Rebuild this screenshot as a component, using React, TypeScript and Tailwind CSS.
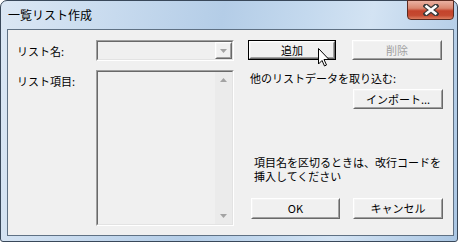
import React from "react";

const FONT = "font-['Noto_Sans_CJK_JP','Noto_Sans',sans-serif]";

function Raised({
  children,
  className = "",
  def = false,
  disabled = false,
}: {
  children?: React.ReactNode;
  className?: string;
  def?: boolean;
  disabled?: boolean;
}) {
  const inner = (
    <div className="h-full w-full border border-t-white border-l-white border-r-[#696969] border-b-[#696969]">
      <div
        className={`h-full w-full border border-t-[#f4f4f4] border-l-[#f4f4f4] border-r-[#a0a0a0] border-b-[#a0a0a0] bg-[#f0f0f0] flex items-center justify-center text-[11px] leading-none ${
          disabled ? "text-[#a0a0a0]" : "text-black"
        }`}
      >
        {children}
      </div>
    </div>
  );
  if (def) {
    return <div className={`border border-black ${className}`}>{inner}</div>;
  }
  return <div className={className}>{inner}</div>;
}

function Sunken({ children, className = "" }: { children?: React.ReactNode; className?: string }) {
  return (
    <div className={`border border-t-[#a0a0a0] border-l-[#a0a0a0] border-r-white border-b-white ${className}`}>
      <div className="h-full w-full border border-t-[#696969] border-l-[#696969] border-r-[#e3e3e3] border-b-[#e3e3e3] bg-[#f0f0f0] flex">
        {children}
      </div>
    </div>
  );
}

function Tri({ up = false }: { up?: boolean }) {
  return (
    <svg width="7" height="4" viewBox="0 0 7 4">
      {up ? <path d="M0 4 L7 4 L3.5 0 Z" fill="#a3a3a3" /> : <path d="M0 0 L7 0 L3.5 4 Z" fill="#a3a3a3" />}
    </svg>
  );
}

export default function App() {
  return (
    <div className={`w-[459px] h-[243px] bg-white overflow-hidden relative ${FONT}`}>
      {/* window */}
      <div className="w-[458px] h-[242px] rounded-t-[7px] rounded-b-[3px] border border-[#39485a] bg-[linear-gradient(100deg,#dbe7f4_0%,#cadcef_20%,#b4cde7_45%,#c4d9ee_62%,#d3e3f3_75%,#aac6e3_100%)] flex flex-col">
        {/* title bar */}
        <div className="h-[28px] flex items-start justify-between">
          <div className="pl-[7px] pt-[6px] text-[12px] leading-[16px] text-black">一覧リスト作成</div>
          <div className="mr-[3px] mt-[-1px] w-[47px] h-[20px] rounded-b-[4px] border border-[#5b2a20] bg-[linear-gradient(#eab1a2_0%,#da8770_40%,#c4432b_55%,#c54a31_80%,#dc7d5f_100%)] flex items-center justify-center">
            <svg width="16" height="12" viewBox="0 0 16 12">
              <path d="M3 2 L13 10 M13 2 L3 10" stroke="#3a3a3a" strokeWidth="5" strokeLinecap="square" />
              <path d="M3.5 2.5 L12.5 9.5 M12.5 2.5 L3.5 9.5" stroke="#ffffff" strokeWidth="2.6" strokeLinecap="square" />
            </svg>
          </div>
        </div>
        {/* client area */}
        <div className="ml-[6px] mr-[3px] w-[447px] h-[207px] border border-[#5f7184] bg-[#f0f0f0] flex text-[11px] text-black leading-[13px]">
          {/* labels */}
          <div className="w-[88px] pl-[9px] flex flex-col">
            <div className="mt-[13px] h-[16px] leading-[16px]">リスト名:</div>
            <div className="mt-[14px] h-[16px] leading-[16px]">リスト項目:</div>
          </div>
          {/* inputs */}
          <div className="w-[138px] flex flex-col">
            <Sunken className="mt-[10px] h-[21px] w-[138px]">
              <div className="flex-1" />
              <Raised className="w-[17px] h-full">
                <Tri />
              </Raised>
            </Sunken>
            <Sunken className="mt-[9px] h-[156px] w-[138px]">
              <div className="flex-1" />
              <div className="w-[17px] h-full bg-[#ebebeb] flex flex-col items-center justify-between py-[6px]">
                <Tri up />
                <Tri />
              </div>
            </Sunken>
          </div>
          {/* right column */}
          <div className="ml-[14px] w-[196px] flex flex-col">
            <div className="mt-[10px] flex">
              <Raised def className="w-[88px] h-[20px]">追加</Raised>
              <Raised disabled className="ml-[16px] w-[90px] h-[20px]">削除</Raised>
            </div>
            <div className="mt-[11px] ml-[2px] h-[14px] leading-[14px]">他のリストデータを取り込む:</div>
            <div className="mt-[4px] flex justify-end pr-[1px]">
              <Raised className="w-[90px] h-[20px]">インポート...</Raised>
            </div>
            <div className="mt-[46px] ml-[6px] flex flex-col">
              <div className="h-[14px] leading-[14px]">項目名を区切るときは、改行コードを</div>
              <div className="h-[14px] leading-[14px]">挿入してください</div>
            </div>
            <div className="mt-[15px] flex justify-between pl-[3px] pr-[1px]">
              <Raised className="w-[89px] h-[21px]">OK</Raised>
              <Raised className="w-[90px] h-[21px]">キャンセル</Raised>
            </div>
          </div>
        </div>
      </div>
      {/* mouse cursor */}
      <svg className="absolute left-[318px] top-[48px]" width="12" height="19" viewBox="0 0 12 19">
        <path
          d="M0.5 0.5 L0.5 16 L4 12.5 L6.5 18 L8.5 17 L6 11.5 L11 11.5 Z"
          fill="#ffffff"
          stroke="#000000"
          strokeWidth="1"
          strokeLinejoin="miter"
        />
      </svg>
    </div>
  );
}
